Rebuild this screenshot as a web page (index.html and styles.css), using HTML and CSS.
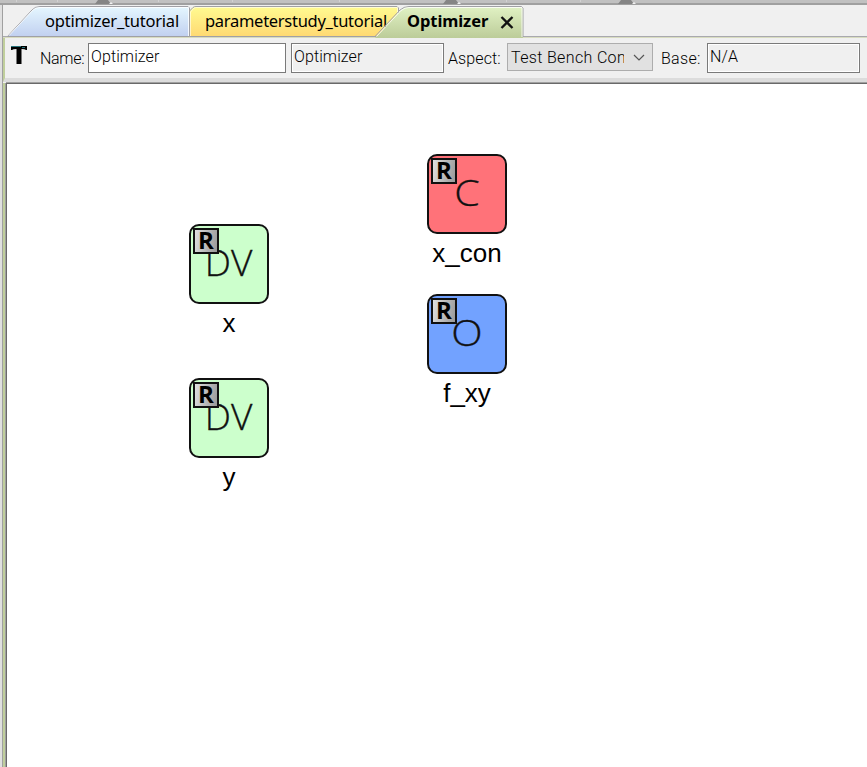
FILE: index.html
```html
<!DOCTYPE html>
<html lang="en">
<head>
<meta charset="utf-8">
<title>Optimizer</title>
<link rel="stylesheet" href="styles.css">
</head>
<body>
<div class="app">
  <svg class="strip" width="867" height="5" viewBox="0 0 867 5">
    <rect width="867" height="3" fill="#c1c1c1"/>
    <path d="M16.500 0v2M57.500 0v2M158.500 0v2M232.500 0v2M339.500 0v2M506.500 0v2M580.500 0v2" stroke="#d2d2d2"/>
    <rect y="3" width="867" height="2" fill="#a0a0a0"/>
    <path d="M98 0h10l3 4H95zM446 0h10l3 4h-16zM621 0h10l3 4h-16z" fill="#858585"/>
    <path d="M109 4l2-2 2 2zM457 4l2-2 2 2zM632 4l2-2 2 2z" fill="#f2f2f2"/>
  </svg>
  <div class="frame">
    <nav class="tabs">
      <div class="tab tab-blue">
        <svg class="shape" width="187" height="31" viewBox="0 0 187 31">
          <defs><linearGradient id="blue" x2="0" y2="1"><stop stop-color="#e5f7ff"/><stop offset="1" stop-color="#c1d0f0"/></linearGradient></defs>
          <path d="M4.500 30.500L29 4Q32 .5 37 .5H185l1.500 1.500V30.500z" fill="url(#blue)" stroke="#a0a0a5"/>
          <path d="M6 29.500L30 4Q33 1.500 37 1.500H185.500V30" fill="none" stroke="#fff" stroke-opacity=".8"/>
        </svg>
        <span class="title">optimizer_tutorial</span>
      </div>
      <div class="tab tab-yellow">
        <svg class="shape" width="210" height="31" viewBox="0 0 210 31">
          <defs><linearGradient id="yellow" x2="0" y2="1"><stop stop-color="#fffb91"/><stop offset="1" stop-color="#ffd972"/></linearGradient></defs>
          <path d="M.5 30.500V5L4 1.500Q5 .5 7 .5H208l1.500 1.500V30.500z" fill="url(#yellow)" stroke="#a0a0a5"/>
          <path d="M1.500 30V6L5 2Q6 1.500 8 1.500H208.500V30" fill="none" stroke="#fff" stroke-opacity=".6"/>
        </svg>
        <span class="title">parameterstudy_tutorial</span>
      </div>
      <div class="tab tab-green">
        <svg class="shape" width="150" height="32" viewBox="0 0 150 32">
          <defs><linearGradient id="green" x2="0" y2="1"><stop stop-color="#e1f2c4"/><stop offset="1" stop-color="#bccc99"/></linearGradient></defs>
          <path d="M1 32L27 4Q30 .5 35 .5H147.500l1.500 1.500V32z" fill="url(#green)"/>
          <path d="M1 30.500L26 4Q30 .5 35 .5H147.500l1.500 1.500V31" fill="none" stroke="#a0a0a5"/>
          <path d="M2.500 30.500L27 4.500Q31 1.500 35 1.500H148V31" fill="none" stroke="#fff" stroke-opacity=".8"/>
        </svg>
        <span class="title">Optimizer</span>
        <svg class="close" width="14" height="13" viewBox="0 0 14 13"><path d="M1.500 1L12.500 12M12.500 1L1.500 12" stroke="#111" stroke-width="2.300"/></svg>
      </div>
    </nav>
    <div class="toolbar">
      <svg class="type" width="16" height="18" viewBox="0 0 16 18"><path d="M0 0H16V4H15Q14 3 10.500 3V18H5.500V3Q2 3 1 4H0z" fill="#000"/><path d="M0 .5H10M11 1.500H14" stroke="#28737b" stroke-width="1"/></svg>
      <span class="label name">Name:</span>
      <div class="field editable">Optimizer</div>
      <div class="field kind">Optimizer</div>
      <span class="label aspect">Aspect:</span>
      <div class="select"><span>Test Bench Com</span><svg width="12" height="7" viewBox="0 0 12 7"><path d="M1 1L6 6L11 1" fill="none" stroke="#555" stroke-width="1.200"/></svg></div>
      <span class="label base">Base:</span>
      <div class="field basefield">N/A</div>
    </div>
    <main class="canvas">
      <div class="node dv x"><div class="box"><span class="ref">R</span><span class="glyph">DV</span></div><div class="caption">x</div></div>
      <div class="node dv y"><div class="box"><span class="ref">R</span><span class="glyph">DV</span></div><div class="caption">y</div></div>
      <div class="node con"><div class="box"><span class="ref">R</span><span class="glyph">C</span></div><div class="caption">x_con</div></div>
      <div class="node obj"><div class="box"><span class="ref">R</span><span class="glyph">O</span></div><div class="caption">f_xy</div></div>
    </main>
  </div>
</div>
</body>
</html>
```

FILE: styles.css
```css
* { box-sizing: border-box; }
body { margin: 0; background: #f0f0f0; color: #000; overflow: hidden; }
.app { width: 867px; height: 767px; display: flex; flex-direction: column; }
svg { display: block; flex: none; }
.frame { flex: 1; margin-left: 2px; border-left: 1px solid #a0a0a0; box-shadow: -2px 0 #e0e0e0; display: flex; flex-direction: column; }
.tabs { height: 33px; padding-top: 1px; display: flex; border-bottom: 1px solid #d8dcc0; background: linear-gradient(#a9a9af, #a9a9af) 0 31px / 100% 1px no-repeat; }
.tab { position: relative; height: 31px; flex: none; font: 16.500px/30px "Noto Sans", sans-serif; white-space: nowrap; }
.shape { position: absolute; left: 0; top: 0; }
.title { position: relative; display: inline-block; letter-spacing: -.22px; }
.tab-blue { width: 187px; padding-left: 42px; }
.tab-yellow { width: 210px; margin-left: -1px; padding-left: 16px; }
.tab-yellow .title { letter-spacing: -.29px; }
.tab-green { width: 150px; margin-left: -25px; padding-left: 33px; display: flex; font-weight: 700; }
.tab-green .close { position: relative; margin: 10px 0 0 12px; }
.tab-green .title { width: 81px; letter-spacing: -.08px; }
.toolbar { height: 44px; border-left: 2px solid #c0cf9c; border-bottom: 4px solid #dcdcdc; display: flex; align-items: flex-start; padding-top: 5px; font: 300 16px/20px Roboto, "Liberation Sans", sans-serif; letter-spacing: .1px; white-space: nowrap; }
.type { margin: 3px 0 0 6px; }
.label { margin-top: 6px; }
.name { width: 48px; margin-left: 13px; letter-spacing: -.3px; }
.field { height: 30px; border: 1px solid #7a7a7a; padding: 3px 2px; box-shadow: inset 0 0 0 1px #fff; }
.editable { width: 198px; background: #fff; }
.kind { width: 153px; margin-left: 5px; }
.aspect { width: 59px; margin-left: 4px; }
.select { width: 146px; height: 28px; border: 1px solid #adadad; background: #e1e1e1; display: flex; align-items: center; padding: 0 7px 0 3px; justify-content: space-between; }
.select span { width: 113px; overflow: hidden; letter-spacing: .35px; padding-top: 1px; }
.base { width: 46px; margin-left: 8px; letter-spacing: .3px; }
.basefield { width: 153px; }
.canvas { position: relative; flex: 1; margin-left: 3px; background: #fff; border-left: 1px solid #696969; border-top: 1px solid #696969; box-shadow: 0 -1px #a0a0a0, -1px 0 #a0a0a0, -3px 0 #c0cf9c; margin-top: 1px; }
.node { position: absolute; width: 80px; }
.box { position: relative; width: 80px; height: 80px; border: 2px solid #111; border-radius: 10px; }
.dv .box { background: #cfc; }
.con .box { background: #ff7279; }
.obj .box { background: #72a2ff; }
.x { left: 182px; top: 140px; }
.y { left: 182px; top: 294px; }
.con { left: 420px; top: 70px; }
.obj { left: 420px; top: 210px; }
.ref { position: absolute; left: 2px; top: 2px; width: 26px; height: 26px; border: 2px solid #111; background: linear-gradient(100deg, #e0e0e0, #999); font: 700 24px/20px "Open Sans", sans-serif; text-align: center; z-index: 1; }
.glyph { display: block; text-align: center; font: 300 36px/74px "Open Sans", sans-serif; color: #111; transform: scaleX(1.14); -webkit-text-stroke: .3px #111; }
.dv .glyph { transform: translateX(-.5px) scaleX(1.03); }
.caption { text-align: center; font: 26px/36px "Liberation Sans", sans-serif; margin-top: 1px; white-space: nowrap; }
```
